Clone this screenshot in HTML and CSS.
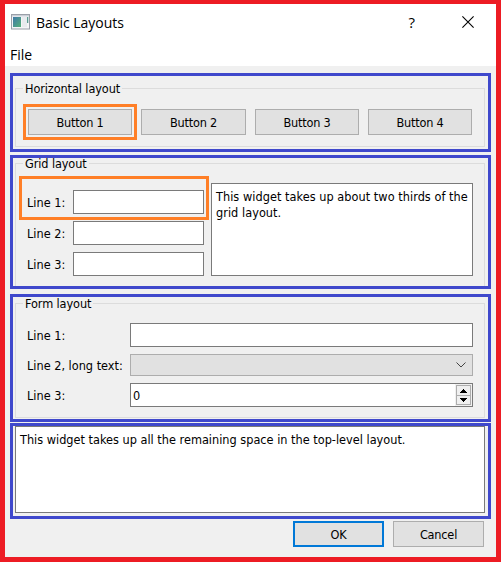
FILE: index.html
```
<!DOCTYPE html>
<html lang="en">
<head>
<meta charset="utf-8">
<title>Basic Layouts</title>
<link rel="stylesheet" href="styles.css">
</head>
<body>
<div class="window">
  <header class="titlebar">
    <svg class="app-icon" width="19" height="16" viewBox="0 0 19 16">
      <defs><linearGradient id="g" x1="0" y1="0" x2="1" y2="1"><stop offset="0" stop-color="#3f78a8"/><stop offset="1" stop-color="#55b078"/></linearGradient></defs>
      <rect x=".5" y=".5" width="18" height="14.5" fill="#f4f5f7" stroke="#9a9fa8"/>
      <rect x="1" y="1" width="17" height="1.4" fill="#c9ced6"/>
      <rect x="2" y="3" width="8" height="10" fill="url(#g)"/>
      <rect x="11" y="3" width="5" height="10" fill="#e8ebee"/>
      <rect x="16" y="3" width="1.3" height="6" fill="#5a9c92"/>
    </svg>
    <h1 class="title">Basic Layouts</h1>
    <span class="help">?</span>
    <svg class="close" width="12" height="12" viewBox="0 0 12 12"><path d="M.4 .4L11.6 11.6M11.6 .4L.4 11.6" stroke="#000" stroke-width="1.1" fill="none"/></svg>
  </header>
  <nav class="menubar"><span class="menu">File</span></nav>
  <main class="content">
    <section class="outline horizontal">
      <div class="group">
        <div class="legend"><span>Horizontal layout</span></div>
        <div class="button-row">
          <div class="button marked">Button 1</div>
          <div class="button">Button 2</div>
          <div class="button">Button 3</div>
          <div class="button">Button 4</div>
        </div>
      </div>
    </section>
    <section class="outline grid">
      <div class="group">
        <div class="legend"><span>Grid layout</span></div>
        <div class="grid-body">
          <div class="lines">
            <div class="line marked"><span>Line 1:</span><div class="field"></div></div>
            <div class="line"><span>Line 2:</span><div class="field"></div></div>
            <div class="line"><span>Line 3:</span><div class="field"></div></div>
          </div>
          <div class="field editor">This widget takes up about two thirds of the<br>grid layout.</div>
        </div>
      </div>
    </section>
    <section class="outline form">
      <div class="group">
        <div class="legend"><span>Form layout</span></div>
        <div class="form-body">
          <span>Line 1:</span><div class="field"></div>
          <span>Line 2, long text:</span>
          <div class="combo"><svg width="10" height="6" viewBox="0 0 10 6"><path d="M.5 .5L5 5L9.500 .5" stroke="#444" fill="none"/></svg></div>
          <span>Line 3:</span>
          <div class="field spin"><span>0</span>
            <div class="steps">
              <div class="step"><svg width="7" height="4" viewBox="0 0 7 4" shape-rendering="crispEdges"><path d="M3 0h1v1h1v1h1v1h1v1H0V3h1V2h1V1h1z"/></svg></div>
              <div class="step"><svg width="7" height="4" viewBox="0 0 7 4" shape-rendering="crispEdges"><path d="M0 0h7v1H6v1H5v1H4v1H3V3H2V2H1V1H0z"/></svg></div>
            </div>
          </div>
        </div>
      </div>
    </section>
    <section class="outline bottom">
      <div class="field editor">This widget takes up all the remaining space in the top-level layout.</div>
    </section>
    <footer class="actions">
      <div class="button default">OK</div>
      <div class="button">Cancel</div>
    </footer>
  </main>
</div>
</body>
</html>
```
FILE: styles.css
```
* { box-sizing: border-box; }
body {
  margin: 0;
  font: 12.6px/16px "DejaVu Sans Condensed", "DejaVu Sans", sans-serif;
  font-stretch: condensed;
  color: #000;
  white-space: nowrap;
}
svg { display: block; flex: none; }
.window {
  width: 501px;
  height: 562px;
  border: 5px solid #ed1c24;
  border-top-width: 4px;
  background: #f0f0f0;
}
.titlebar {
  display: flex;
  align-items: center;
  height: 36px;
  padding: 0 22px 0 6px;
  background: #fff;
  font-family: "Open Sans", "Noto Sans", sans-serif;
  font-stretch: normal;
}
.title { margin: 1px 0 0 6px; font-size: 14px; font-weight: 400; line-height: 20px; letter-spacing: -.02px; }
.help { margin: 0 47px 0 auto; font-size: 15px; }
.menubar {
  height: 26px;
  padding: 5px 0 0 5px;
  background: #fff;
  font: 14px/20px "Open Sans", "Noto Sans", sans-serif;
}
.content { padding: 7px 5px 0; }
.outline { border: 3px solid #3f48cc; padding: 0 3px 0 2px; }
.horizontal { height: 79px; margin-bottom: 3px; padding-top: 12px; }
.grid { height: 134px; margin-bottom: 5px; padding-top: 5px; }
.form { height: 128px; margin-bottom: 1px; padding-top: 6px; }
.bottom { height: 96px; margin-bottom: 2px; }
.group { border: 1px solid #dcdcdc; }
.horizontal .group { height: 59px; }
.grid .group { height: 123px; border-bottom: 0; }
.form .group { height: 115px; }
.legend { height: 16px; margin: -9px 0 0 7px; letter-spacing: -.1px; }
.legend span {
  display: inline-block;
  padding: 1px 2px 0;
  background: linear-gradient(#f0f0f0, #f0f0f0) 0 6px / 100% 5px no-repeat;
}
.button-row {
  display: grid;
  grid-template-columns: 104px 105px 104px 104px;
  gap: 9px;
  margin: 13px 0 0 12px;
}
.button {
  display: flex;
  align-items: center;
  justify-content: center;
  height: 26px;
  padding-top: 1px;
  border: 1px solid #adadad;
  background: #e1e1e1;
  letter-spacing: -.2px;
}
.marked { position: relative; }
.marked::after { content: ""; position: absolute; border: 3px solid #ff7f27; }
.button.marked::after { inset: -6px; }
.line.marked::after { inset: -14px -5px -6px -8px; }
.field { border: 1px solid #7a7a7a; background: #fff; }
.grid-body { display: flex; gap: 7px; margin: 12px 0 0 11px; }
.lines { display: flex; flex-direction: column; gap: 7px; padding-top: 7px; }
.line { display: grid; grid-template-columns: 46px 131px; align-items: center; height: 24px; }
.line > span { padding-top: 1px; }
.line .field { height: 24px; }
.editor { padding: 5px 4px; }
.grid .editor { width: 262px; height: 93px; letter-spacing: .04px; }
.bottom .editor { height: 87px; }
.form-body {
  display: grid;
  grid-template-columns: 103px 343px;
  grid-template-rows: 24px 22px 24px;
  row-gap: 7px;
  margin: 12px 0 0 11px;
}
.form-body > span { align-self: center; padding-top: 2px; }
.combo {
  display: flex;
  align-items: center;
  justify-content: flex-end;
  padding-right: 6px;
  border: 1px solid #adadad;
  background: #e1e1e1;
}
.spin { display: flex; justify-content: space-between; padding-left: 2px; line-height: 24px; }
.steps { width: 17px; padding: 1px; background: #f0f0f0; }
.step {
  display: flex;
  align-items: center;
  justify-content: center;
  height: 11px;
  border: 1px solid #adadad;
}
.step + .step { height: 10px; margin-top: -1px; }
.actions { display: flex; justify-content: flex-end; gap: 9px; padding-right: 7px; }
.actions .button { width: 91px; }
.button.default { border: 2px solid #0078d7; }
```
